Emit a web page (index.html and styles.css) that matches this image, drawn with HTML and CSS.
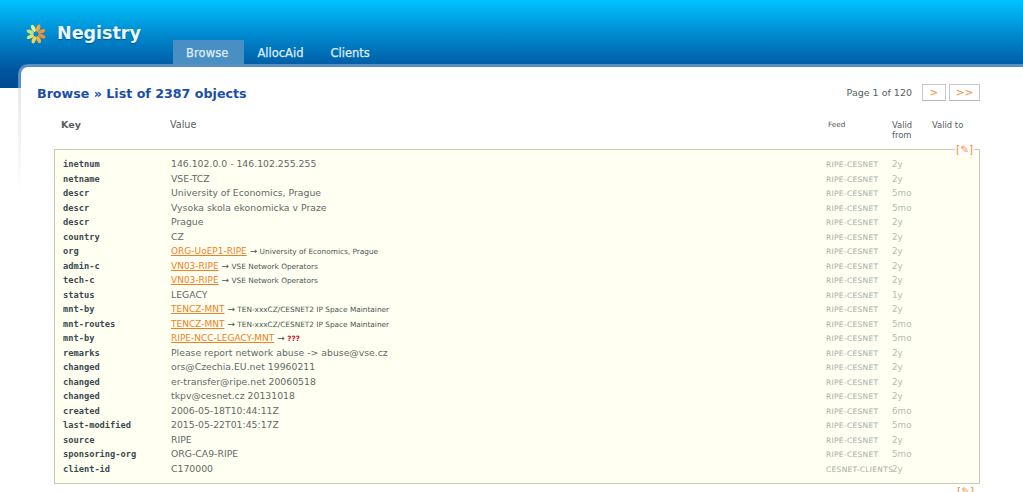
FILE: index.html
```html
<!DOCTYPE html>
<html lang="en">
<head>
<meta charset="utf-8">
<title>Negistry</title>
<link rel="stylesheet" href="styles.css">
</head>
<body>
<header class="top">
  <div class="brand">
    <svg class="logo" viewBox="0 0 20 20" width="20" height="20" aria-hidden="true">
      <g transform="translate(10 10)">
        <ellipse cx="0" cy="-6.2" rx="1.9" ry="3.8" fill="#f9a63e" transform="rotate(20)"/>
        <ellipse cx="0" cy="-6.2" rx="1.9" ry="3.8" fill="#f7913c" transform="rotate(65)"/>
        <ellipse cx="0" cy="-6.2" rx="1.9" ry="3.8" fill="#f58a3a" transform="rotate(110)"/>
        <ellipse cx="0" cy="-6.2" rx="1.9" ry="3.8" fill="#f8b13e" transform="rotate(155)"/>
        <ellipse cx="0" cy="-6.2" rx="1.9" ry="3.8" fill="#f6d64a" transform="rotate(200)"/>
        <ellipse cx="0" cy="-6.2" rx="1.9" ry="3.8" fill="#d8e86a" transform="rotate(245)"/>
        <ellipse cx="0" cy="-6.2" rx="1.9" ry="3.8" fill="#c4e27c" transform="rotate(290)"/>
        <ellipse cx="0" cy="-6.2" rx="1.9" ry="3.8" fill="#e6ee86" transform="rotate(335)"/>
      </g>
    </svg>
    <span class="name">Negistry</span>
  </div>
  <nav class="tabs">
    <a class="tab active">Browse</a>
    <a class="tab">AllocAid</a>
    <a class="tab">Clients</a>
  </nav>
</header>
<main class="panel">
  <div class="sheet">
    <div class="title-row">
      <h1 class="title">Browse » List of 2387 objects</h1>
      <div class="pager">
        <span class="page-label">Page 1 of 120</span>
        <a class="page-btn one">&gt;</a>
        <a class="page-btn two">&gt;&gt;</a>
      </div>
    </div>
    <div class="heads">
      <div class="h-key">Key</div>
      <div class="h-val">Value</div>
      <div class="h-feed">Feed</div>
      <div class="h-from">Valid from</div>
      <div class="h-to">Valid to</div>
    </div>
    <section class="object">
      <a class="edit">[✎]</a>
      <div class="row"><span class="k">inetnum</span><span class="v">146.102.0.0 - 146.102.255.255</span><span class="f">RIPE-CESNET</span><span class="d">2y</span></div>
      <div class="row"><span class="k">netname</span><span class="v">VSE-TCZ</span><span class="f">RIPE-CESNET</span><span class="d">2y</span></div>
      <div class="row"><span class="k">descr</span><span class="v">University of Economics, Prague</span><span class="f">RIPE-CESNET</span><span class="d">5mo</span></div>
      <div class="row"><span class="k">descr</span><span class="v">Vysoka skola ekonomicka v Praze</span><span class="f">RIPE-CESNET</span><span class="d">5mo</span></div>
      <div class="row"><span class="k">descr</span><span class="v">Prague</span><span class="f">RIPE-CESNET</span><span class="d">2y</span></div>
      <div class="row"><span class="k">country</span><span class="v">CZ</span><span class="f">RIPE-CESNET</span><span class="d">2y</span></div>
      <div class="row"><span class="k">org</span><span class="v"><a class="ref">ORG-UoEP1-RIPE</a> <small class="note"><span class="arrow">→</span> University of Economics, Prague</small></span><span class="f">RIPE-CESNET</span><span class="d">2y</span></div>
      <div class="row"><span class="k">admin-c</span><span class="v"><a class="ref">VN03-RIPE</a> <small class="note"><span class="arrow">→</span> VSE Network Operators</small></span><span class="f">RIPE-CESNET</span><span class="d">2y</span></div>
      <div class="row"><span class="k">tech-c</span><span class="v"><a class="ref">VN03-RIPE</a> <small class="note"><span class="arrow">→</span> VSE Network Operators</small></span><span class="f">RIPE-CESNET</span><span class="d">2y</span></div>
      <div class="row"><span class="k">status</span><span class="v">LEGACY</span><span class="f">RIPE-CESNET</span><span class="d">1y</span></div>
      <div class="row"><span class="k">mnt-by</span><span class="v"><a class="ref">TENCZ-MNT</a> <small class="note"><span class="arrow">→</span> TEN-xxxCZ/CESNET2 IP Space Maintainer</small></span><span class="f">RIPE-CESNET</span><span class="d">2y</span></div>
      <div class="row"><span class="k">mnt-routes</span><span class="v"><a class="ref">TENCZ-MNT</a> <small class="note"><span class="arrow">→</span> TEN-xxxCZ/CESNET2 IP Space Maintainer</small></span><span class="f">RIPE-CESNET</span><span class="d">5mo</span></div>
      <div class="row"><span class="k">mnt-by</span><span class="v"><a class="ref">RIPE-NCC-LEGACY-MNT</a> <small class="note"><span class="arrow">→</span> <b class="unknown">???</b></small></span><span class="f">RIPE-CESNET</span><span class="d">5mo</span></div>
      <div class="row"><span class="k">remarks</span><span class="v">Please report network abuse -&gt; abuse@vse.cz</span><span class="f">RIPE-CESNET</span><span class="d">2y</span></div>
      <div class="row"><span class="k">changed</span><span class="v">ors@Czechia.EU.net 19960211</span><span class="f">RIPE-CESNET</span><span class="d">2y</span></div>
      <div class="row"><span class="k">changed</span><span class="v">er-transfer@ripe.net 20060518</span><span class="f">RIPE-CESNET</span><span class="d">2y</span></div>
      <div class="row"><span class="k">changed</span><span class="v">tkpv@cesnet.cz 20131018</span><span class="f">RIPE-CESNET</span><span class="d">2y</span></div>
      <div class="row"><span class="k">created</span><span class="v">2006-05-18T10:44:11Z</span><span class="f">RIPE-CESNET</span><span class="d">6mo</span></div>
      <div class="row"><span class="k">last-modified</span><span class="v">2015-05-22T01:45:17Z</span><span class="f">RIPE-CESNET</span><span class="d">5mo</span></div>
      <div class="row"><span class="k">source</span><span class="v">RIPE</span><span class="f">RIPE-CESNET</span><span class="d">2y</span></div>
      <div class="row"><span class="k">sponsoring-org</span><span class="v">ORG-CA9-RIPE</span><span class="f">RIPE-CESNET</span><span class="d">5mo</span></div>
      <div class="row"><span class="k">client-id</span><span class="v">C170000</span><span class="f">CESNET-CLIENTS</span><span class="d">2y</span></div>
    </section>
    <div class="next-edit"><a class="edit-next">[✎]</a></div>
  </div>
</main>
</body>
</html>
```
FILE: styles.css
```css
* { box-sizing: border-box; }
html, body { margin: 0; height: 492px; overflow: hidden; background: #fff; }
body { font-family: "DejaVu Sans", sans-serif; color: #55605f; }

.top {
  height: 88px;
  background: linear-gradient(#00c3ff 0, #0089cf 35px, #00559f 70px, #004a90 88px);
  position: relative;
}
.brand { position: absolute; left: 26px; top: 24px; display: flex; align-items: flex-start; }
.name {
  margin-left: 11px;
  font-size: 17.5px;
  line-height: 19px;
  font-weight: bold;
  color: #eef8ff;
  text-shadow: 0 1px 1px rgba(0,40,90,.5);
}
.tabs { display: flex; padding: 40px 0 0 173px; height: 64px; }
.tab {
  padding: 0 13.5px;
  height: 24px;
  line-height: 26px;
  font-size: 11.5px;
  color: #dfeefa;
  -webkit-text-stroke: .25px #dfeefa;
}
.active { background: #4a8fc4; padding: 0 13px; width: 71px; letter-spacing: .1px; }

.panel {
  position: relative;
  margin: -24px 0 0 18px;
  height: 428px;
  padding: 3px 0 0 3px;
  border-top-left-radius: 10px;
  background: linear-gradient(#5a8fc2 24px, #e8e8e8 24px, #fff 130px);
  overflow: hidden;
}
.sheet {
  height: 100%;
  background: #fff;
  border-top-left-radius: 7px;
  padding: 0 43px 0 16px;
  overflow: hidden;
}
.title-row { display: flex; justify-content: space-between; align-items: flex-start; padding-top: 19px; height: 50px; }
.title { margin: 0; font-size: 12.65px; line-height: 16px; font-weight: bold; color: #1a4fa8; }
.pager { display: flex; align-items: flex-start; font-size: 9.5px; line-height: 16px; margin-top: -2px; }
.page-label { margin-right: 10px; padding-top: 1px; }
.page-btn {
  height: 17px;
  line-height: 14px;
  border: 1px solid #c9c9c9;
  border-bottom-color: #b5b5b5;
  color: #f0923c;
  text-align: center;
  font-size: 10.5px;
}
.one { width: 24px; margin-right: 3px; }
.two { width: 31px; }

.heads {
  display: flex;
  font-size: 9.6px;
  line-height: 10px;
  height: 32px;
  padding-left: 24px;
}
.h-key { width: 109px; font-weight: bold; padding-top: 3px; font-size: 9.5px; }
.h-val { width: 658px; padding-top: 3px; }
.h-feed { width: 64px; font-size: 7.3px; padding-top: 3px; font-weight: normal; }
.h-from { width: 40px; font-size: 8.4px; padding-top: 3px; }
.h-to { width: 40px; font-size: 8.4px; padding-top: 3px; }

.object {
  position: relative;
  margin-left: 17px;
  width: 926px;
  height: 335px;
  background: #fffff2;
  border: 1px solid #c9c9b4;
  padding: 7px 0 0 8px;
}
.edit, .edit-next {
  font-size: 10.5px;
  line-height: 11px;
  color: #ef8f3e;
  background: #fff;
}
.edit { position: absolute; right: 5px; top: -6px; padding: 0 1px; }
.row { display: flex; height: 14.5px; line-height: 14.5px; white-space: nowrap; align-items: baseline; }
.k {
  width: 108px;
  font-family: "DejaVu Sans Mono", monospace;
  font-weight: bold;
  font-size: 8.7px;
  color: #3a4a50;
}
.v { width: 655px; font-size: 9.3px; color: #5f6a68; }
.f { width: 66px; font-size: 7.5px; color: #a5aea8; letter-spacing: .3px; }
.d { font-size: 8.8px; color: #b5bcae; }
.ref { color: #ef7f24; text-decoration: underline; font-size: 9px; }
.note { font-size: 7.35px; color: #4a5456; }
.arrow { font-size: 9px; }
.unknown { color: #d01020; }
.next-edit { width: 926px; margin-left: 17px; text-align: right; padding-right: 6px; line-height: 11px; }
```
